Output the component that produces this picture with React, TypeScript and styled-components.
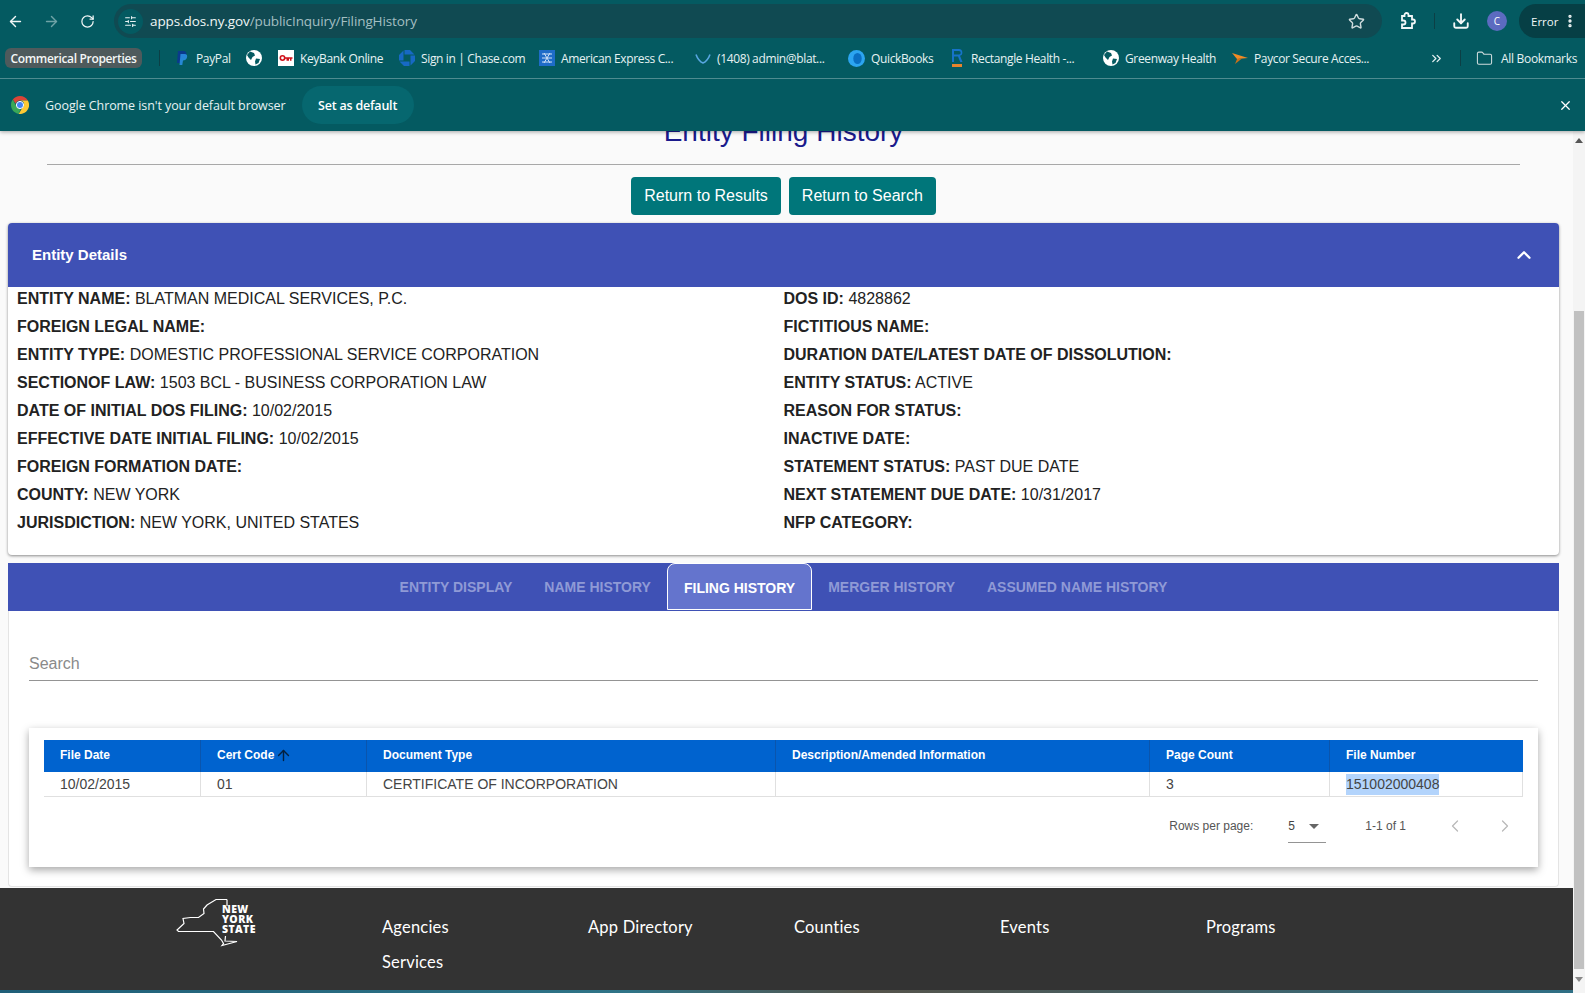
import React from "react";
import styled, { createGlobalStyle } from "styled-components";
import {
  ArrowLeft,
  ArrowRight,
  ArrowUp,
  ChevronLeft,
  ChevronRight,
  ChevronsRight,
  ChevronUp,
  Download,
  EllipsisVertical,
  Folder,
  RotateCw,
  SlidersHorizontal,
  Star,
  X,
} from "lucide-react";

const GlobalStyle = createGlobalStyle`
  html, body {
    margin: 0;
    padding: 0;
    overflow: hidden;
  }
  * {
    box-sizing: border-box;
  }
`;

const ExtensionIcon = () => (
  <svg width="20" height="20" viewBox="0 0 20 20" fill="none" stroke="#f2f7f7" strokeWidth="1.800">
    <path d="M5 5h2.500V4a2 2 0 0 1 4 0v1H15v3.500h1a2 2 0 0 1 0 4h-1V17H5v-3.500h1.500a2 2 0 0 0 0-4H5z" />
  </svg>
);

const Globe = () => (
  <svg width="16" height="16" viewBox="0 0 16 16">
    <circle cx="8" cy="8" r="8" fill="#fff" />
    <path d="M4 1.500 8 3 9 5.500 6.500 7 5 10 2.500 7.500 1 5zM10 8.500l4 .5-1.500 4-3 1.500-.5-3z" fill="#045a61" />
  </svg>
);

const PayPalIcon = () => (
  <svg width="16" height="16" viewBox="0 0 16 16">
    <path d="M4 1h5c3 0 4 2 3 4.500C11 8 9 8.500 7 8.500L6.300 13H3z" fill="#0a3a8c" />
    <path d="M6.500 4h4c2.500 0 3 1.500 2.500 3.500-.5 2-2 3-4 3L8.300 15H5.500z" fill="#2a8de0" opacity=".9" />
  </svg>
);

const KeyIcon = () => (
  <svg width="16" height="16" viewBox="0 0 16 16">
    <rect width="16" height="16" fill="#fff" />
    <circle cx="4.500" cy="8" r="2.200" fill="none" stroke="#d0121b" strokeWidth="1.600" />
    <path d="M6.500 7.200h8v1.600h-1v2h-1.500v-2h-1v2H8.500v-2h-2z" fill="#d0121b" />
  </svg>
);

const ChaseIcon = () => (
  <svg width="16" height="16" viewBox="0 0 16 16" fill="#1769c4">
    <path d="M5.500 0H11l4.500 4.500H5.500zM16 5.500V11l-4.500 4.500V5.500z" />
    <path d="M10.500 16H5L.5 11.500h10zM0 10.500V5l4.500-4.500v10z" />
    <rect x="5" y="5" width="6" height="6" fill="#045a61" />
  </svg>
);

const AmexIcon = () => (
  <svg width="16" height="16" viewBox="0 0 16 16">
    <rect width="16" height="16" fill="#1e6cc8" />
    <path d="M3 4h10M3 8h10M3 12h10M5 3l6 10M11 3 5 13" stroke="#cfe2f7" strokeWidth="1" />
  </svg>
);

const ChevronMark = () => (
  <svg width="16" height="16" viewBox="0 0 16 16">
    <path d="M1 4.500C3 10 5.500 12 8 13c2.500-1 5-3 7-8.500" fill="none" stroke="#58a6e0" strokeWidth="1.600" />
  </svg>
);

const QuickBooksIcon = () => (
  <svg width="17" height="17" viewBox="0 0 17 17">
    <circle cx="8.500" cy="8.500" r="8.500" fill="#2ca5f0" />
    <ellipse cx="9.500" cy="8.500" rx="4.200" ry="5.500" fill="#0a6fc2" />
  </svg>
);

const RectangleIcon = () => (
  <svg width="14" height="18" viewBox="0 0 14 18">
    <path
      fillRule="evenodd"
      d="M1 0h7a3.500 3.500 0 0 1 1 6.800L11.500 13H9.200L7 7.500H3V13H1zM3 2v3.500h5a1.750 1.750 0 0 0 0-3.500z"
      fill="#1673c9"
    />
    <rect x="1" y="15" width="10" height="3" fill="#e8842c" />
  </svg>
);

const PaycorIcon = () => (
  <svg width="16" height="12" viewBox="0 0 16 12">
    <path d="M0 1 16 6 5 7z" fill="#f08a24" />
    <path d="M5 7 10 6.500 3 12z" fill="#c9701a" />
  </svg>
);

const ChromeIcon = () => (
  <svg width="18" height="18" viewBox="0 0 18 18">
    <path d="M9 0a9 9 0 0 1 7.800 4.500H9A4.500 4.500 0 0 0 4.700 7.700L1.800 3.600A9 9 0 0 1 9 0z" fill="#db4437" />
    <path d="M1.800 3.600 5.300 10a4.500 4.500 0 0 0 4.500 2.400L7.700 17.900A9 9 0 0 1 1.800 3.600z" fill="#3aa757" />
    <path d="M16.800 4.500A9 9 0 0 1 7.700 17.900l3.900-6.600A4.500 4.500 0 0 0 12.900 6.800 4.500 4.500 0 0 0 9 4.500z" fill="#fcc934" />
    <circle cx="9" cy="9" r="3.600" fill="#4285f4" stroke="#fff" strokeWidth="1" />
  </svg>
);

const NewYorkLogo = () => (
  <svg width="82" height="50" viewBox="16 12 82 50">
    <path
      d="M67 14.500H56L47 20 43.500 24 44 28.500 38.500 32.500H30.500L23 33.500 24 38.500 17 45 18.500 46.500H53.500L61.500 55 63.500 58.500 62 60.500 77 56.500 65 56 65.500 51M67 14.500V21"
      fill="none"
      stroke="#fff"
      strokeWidth="1.200"
    />
    <LogoText x="62" y="28">NEW</LogoText>
    <LogoText x="62" y="38">YORK</LogoText>
    <LogoText x="62" y="48">STATE</LogoText>
  </svg>
);

const bookmarks = [
  { name: "PayPal", icon: <PayPalIcon />, width: 72 },
  { name: "", icon: <Globe />, width: 32 },
  { name: "KeyBank Online", icon: <KeyIcon />, width: 121 },
  { name: "Sign in | Chase.com", icon: <ChaseIcon />, width: 140 },
  { name: "American Express C...", icon: <AmexIcon />, width: 156 },
  { name: "(1408) admin@blat...", icon: <ChevronMark />, width: 153 },
  { name: "QuickBooks", icon: <QuickBooksIcon />, width: 103 },
  { name: "Rectangle Health -...", icon: <RectangleIcon />, width: 152 },
  { name: "Greenway Health", icon: <Globe />, width: 129 },
  { name: "Paycor Secure Acces...", icon: <PaycorIcon />, width: 188 },
];

const detailsLeft = [
  ["ENTITY NAME:", "BLATMAN MEDICAL SERVICES, P.C."],
  ["FOREIGN LEGAL NAME:", ""],
  ["ENTITY TYPE:", "DOMESTIC PROFESSIONAL SERVICE CORPORATION"],
  ["SECTIONOF LAW:", "1503 BCL - BUSINESS CORPORATION LAW"],
  ["DATE OF INITIAL DOS FILING:", "10/02/2015"],
  ["EFFECTIVE DATE INITIAL FILING:", "10/02/2015"],
  ["FOREIGN FORMATION DATE:", ""],
  ["COUNTY:", "NEW YORK"],
  ["JURISDICTION:", "NEW YORK, UNITED STATES"],
];

const detailsRight = [
  ["DOS ID:", "4828862"],
  ["FICTITIOUS NAME:", ""],
  ["DURATION DATE/LATEST DATE OF DISSOLUTION:", ""],
  ["ENTITY STATUS:", "ACTIVE"],
  ["REASON FOR STATUS:", ""],
  ["INACTIVE DATE:", ""],
  ["STATEMENT STATUS:", "PAST DUE DATE"],
  ["NEXT STATEMENT DUE DATE:", "10/31/2017"],
  ["NFP CATEGORY:", ""],
];

const tabs = ["Entity Display", "Name History", "Filing History", "Merger History", "Assumed Name History"];

const columns = [
  { title: "File Date", value: "10/02/2015", width: 157 },
  { title: "Cert Code", value: "01", width: 166 },
  { title: "Document Type", value: "CERTIFICATE OF INCORPORATION", width: 409 },
  { title: "Description/Amended Information", value: "", width: 374 },
  { title: "Page Count", value: "3", width: 180 },
  { title: "File Number", value: "151002000408", width: 193 },
];

const footerLinks = ["Agencies", "App Directory", "Counties", "Events", "Programs", "Services"];

const App: React.FC = () => {
  return (
    <Screen>
      <GlobalStyle />
      <BrowserChrome>
        <Toolbar>
          <NavButton>
            <ArrowLeft size={17} />
          </NavButton>
          <NavButton $dim>
            <ArrowRight size={17} />
          </NavButton>
          <NavButton>
            <RotateCw size={15} />
          </NavButton>
          <AddressBar>
            <SiteButton>
              <SlidersHorizontal size={13} />
            </SiteButton>
            <Host>apps.dos.ny.gov</Host>
            <UrlPath>/publicInquiry/FilingHistory</UrlPath>
            <StarSlot>
              <Star size={17} />
            </StarSlot>
          </AddressBar>
          <ToolIcon $width={50}>
            <ExtensionIcon />
          </ToolIcon>
          <ToolSeparator />
          <ToolIcon $width={52}>
            <Download size={18} strokeWidth={2.5} />
          </ToolIcon>
          <Avatar>C</Avatar>
          <ErrorPill>
            Error
            <EllipsisVertical size={16} strokeWidth={3} />
          </ErrorPill>
        </Toolbar>
        <BookmarkBar>
          <FolderPill>Commerical Properties</FolderPill>
          <BookmarkSeparator />
          {bookmarks.map((b) => (
            <Bookmark key={b.name || "globe"} $width={b.width}>
              {b.icon}
              {b.name && <span>{b.name}</span>}
            </Bookmark>
          ))}
          <MoreBookmarks>
            <ChevronsRight size={15} />
          </MoreBookmarks>
          <BookmarkSeparator $after />
          <AllBookmarks>
            <Folder size={17} strokeWidth={1.5} />
            <span>All Bookmarks</span>
          </AllBookmarks>
        </BookmarkBar>
        <InfoBanner>
          <ChromeIcon />
          <BannerText>Google Chrome isn't your default browser</BannerText>
          <DefaultButton>Set as default</DefaultButton>
          <BannerClose>
            <X size={15} />
          </BannerClose>
        </InfoBanner>
      </BrowserChrome>

      <Viewport>
        <Main>
          <TitleClip>
            <Title>Entity Filing History</Title>
          </TitleClip>
          <Rule />
          <ButtonRow>
            <ActionButton>Return to Results</ActionButton>
            <ActionButton>Return to Search</ActionButton>
          </ButtonRow>

          <DetailsCard>
            <DetailsHeader>
              <span>Entity Details</span>
              <ChevronUp size={22} strokeWidth={2.5} />
            </DetailsHeader>
            <DetailsBody>
              {[detailsLeft, detailsRight].map((rows, i) => (
                <DetailsColumn key={i}>
                  {rows.map(([label, value]) => (
                    <DetailRow key={label}>
                      <strong>{label}</strong> {value}
                    </DetailRow>
                  ))}
                </DetailsColumn>
              ))}
            </DetailsBody>
          </DetailsCard>

          <TabBar>
            {tabs.map((t) => (
              <Tab key={t} $active={t === "Filing History"}>
                {t}
              </Tab>
            ))}
          </TabBar>

          <TabPanel>
            <SearchField>Search</SearchField>
            <TablePaper>
              <HeaderRow>
                {columns.map((c) => (
                  <HeaderCell key={c.title} $width={c.width}>
                    {c.title}
                    {c.title === "Cert Code" && <SortArrow size={17} strokeWidth={2} />}
                  </HeaderCell>
                ))}
              </HeaderRow>
              <BodyRow>
                {columns.map((c) => (
                  <BodyCell key={c.title} $width={c.width}>
                    {c.title === "File Number" ? <Selected>{c.value}</Selected> : c.value}
                  </BodyCell>
                ))}
              </BodyRow>
              <Pagination>
                <span>Rows per page:</span>
                <RowsSelect>
                  5<Caret />
                </RowsSelect>
                <PageRange>1-1 of 1</PageRange>
                <PageArrow>
                  <ChevronLeft size={20} strokeWidth={1.5} />
                </PageArrow>
                <PageArrow>
                  <ChevronRight size={20} strokeWidth={1.5} />
                </PageArrow>
              </Pagination>
            </TablePaper>
          </TabPanel>

          <Footer>
            <LogoSlot>
              <NewYorkLogo />
            </LogoSlot>
            <FooterLinks>
              {footerLinks.map((l) => (
                <FooterLink key={l}>{l}</FooterLink>
              ))}
            </FooterLinks>
          </Footer>
          <FooterStrip />
        </Main>
        <ScrollBar>
          <ScrollArrow />
          <ScrollThumb />
          <ScrollArrow $down />
        </ScrollBar>
      </Viewport>
    </Screen>
  );
};

export default App;

const LogoText = styled.text`
  font-family: "Open Sans", sans-serif;
  font-size: 10.5px;
  font-weight: 800;
  letter-spacing: 0.4px;
  fill: #fff;
`;

const Screen = styled.div`
  width: 1585px;
  height: 993px;
  overflow: hidden;
  display: flex;
  flex-direction: column;
  background: #fafafa;
  font-family: "Liberation Sans", Arial, sans-serif;
`;

const BrowserChrome = styled.div`
  position: relative;
  z-index: 2;
  height: 131px;
  flex: none;
  background: #045a61;
  color: #e6f2f3;
  font-family: "Open Sans", sans-serif;
  box-shadow: 0 1px 4px rgba(0, 0, 0, 0.35);
`;

const Toolbar = styled.div`
  height: 40px;
  padding-top: 4px;
  display: flex;
  align-items: flex-start;
`;

const NavButton = styled.div<{ $dim?: boolean }>`
  width: 36px;
  height: 34px;
  flex: none;
  display: flex;
  align-items: center;
  justify-content: center;
  color: ${(p) => (p.$dim ? "#6fa3a7" : "#f2f7f7")};

  &:first-child {
    margin-left: -3px;
  }
`;

const AddressBar = styled.div`
  width: 1268px;
  height: 34px;
  flex: none;
  margin-left: 9px;
  border-radius: 17px;
  background: #104a52;
  display: flex;
  align-items: center;
  padding-left: 4px;
  font-size: 13.500px;
  letter-spacing: -0.1px;
`;

const SiteButton = styled.div`
  width: 25px;
  height: 25px;
  border-radius: 50%;
  background: #045a61;
  display: flex;
  align-items: center;
  justify-content: center;
  margin-right: 7px;
`;

const Host = styled.span`
  color: #f1f6f6;
`;

const UrlPath = styled.span`
  color: #a4bfc2;
`;

const StarSlot = styled.div`
  margin-left: auto;
  margin-right: 17px;
  display: flex;
  color: #cfdcdd;
`;

const ToolIcon = styled.div<{ $width: number }>`
  width: ${(p) => p.$width}px;
  height: 34px;
  flex: none;
  display: flex;
  align-items: center;
  justify-content: center;
  color: #f2f7f7;
`;

const ToolSeparator = styled.div`
  width: 1px;
  height: 16px;
  margin: 9px 0 0 2px;
  background: #0c3f45;
  flex: none;
`;

const Avatar = styled.div`
  width: 20px;
  height: 20px;
  flex: none;
  margin-top: 7px;
  border-radius: 50%;
  background: #5c6bc0;
  color: #fff;
  font-size: 10px;
  display: flex;
  align-items: center;
  justify-content: center;
`;

const ErrorPill = styled.div`
  width: 67px;
  height: 34px;
  flex: none;
  margin-left: 12px;
  padding-left: 12px;
  border-radius: 17px 0 0 17px;
  background: #063f45;
  color: #f2f7f7;
  font-size: 11.500px;
  display: flex;
  align-items: center;
  gap: 4px;
`;

const BookmarkBar = styled.div`
  height: 39px;
  display: flex;
  align-items: center;
  padding: 0 0 2px 5px;
  border-bottom: 1px solid #4f8b90;
  font-size: 12px;
`;

const FolderPill = styled.div`
  width: 137px;
  height: 20px;
  flex: none;
  border-radius: 6px;
  background: #4e5a5c;
  color: #f4f7f7;
  font-weight: 600;
  font-size: 12px;
  letter-spacing: -0.33px;
  white-space: nowrap;
  display: flex;
  align-items: center;
  justify-content: center;
`;

const BookmarkSeparator = styled.div<{ $after?: boolean }>`
  width: 1px;
  height: 16px;
  flex: none;
  margin: ${(p) => (p.$after ? "0 15px 0 15px" : "0 6px 0 17px")};
  background: #0c3f45;
`;

const Bookmark = styled.div<{ $width: number }>`
  width: ${(p) => p.$width}px;
  flex: none;
  display: flex;
  align-items: center;
  gap: 6px;
  padding-left: 8px;
  white-space: nowrap;
  letter-spacing: -0.36px;

  svg {
    flex: none;
  }
`;

const MoreBookmarks = styled.div`
  width: 16px;
  margin-left: 17px;
  flex: none;
  display: flex;
  color: #e6f2f3;
`;

const AllBookmarks = styled.div`
  flex: none;
  display: flex;
  align-items: center;
  gap: 8px;
  white-space: nowrap;
  letter-spacing: -0.3px;

  svg {
    color: #cfdcdd;
  }
`;

const InfoBanner = styled.div`
  height: 52px;
  display: flex;
  align-items: center;
  padding-left: 11px;
`;

const BannerText = styled.div`
  margin-left: 16px;
  font-size: 12.500px;
  letter-spacing: -0.08px;
  white-space: nowrap;
`;

const DefaultButton = styled.div`
  width: 112px;
  height: 38px;
  margin-left: 16px;
  border-radius: 19px;
  background: #06676f;
  color: #fff;
  font-weight: 600;
  font-size: 12.500px;
  letter-spacing: -0.2px;
  display: flex;
  align-items: center;
  justify-content: center;
`;

const BannerClose = styled.div`
  margin-left: auto;
  margin-right: 12px;
  display: flex;
  color: #fff;
`;

const Viewport = styled.div`
  flex: 1;
  min-height: 0;
  display: flex;
`;

const Main = styled.main`
  flex: 1;
  min-width: 0;
  display: flex;
  flex-direction: column;
`;

const TitleClip = styled.div`
  height: 16px;
  flex: none;
  padding-right: 6px;
  overflow: hidden;
  display: flex;
  align-items: flex-end;
  justify-content: center;
`;

const Title = styled.h1`
  margin: 0 0 -1px;
  color: #1a1a8c;
  font-size: 28px;
  font-weight: 400;
  line-height: 32px;
  white-space: nowrap;
`;

const Rule = styled.div`
  height: 1px;
  flex: none;
  margin: 17px 53px 0 47px;
  background: #a8a8a8;
`;

const ButtonRow = styled.div`
  margin-top: 12px;
  padding-right: 6px;
  display: flex;
  justify-content: center;
  gap: 8px;
`;

const ActionButton = styled.div`
  height: 38px;
  padding: 0 13px;
  border-radius: 4px;
  background: #00767a;
  color: #fff;
  font-size: 16px;
  display: flex;
  align-items: center;
`;

const DetailsCard = styled.section`
  margin: 8px 14px 0 8px;
  height: 332px;
  flex: none;
  border-radius: 4px;
  background: #fff;
  box-shadow: 0 1px 3px rgba(0, 0, 0, 0.45);
  overflow: hidden;
`;

const DetailsHeader = styled.div`
  height: 64px;
  padding: 0 24px 1px;
  background: #3f51b5;
  color: #fff;
  font-size: 15px;
  font-weight: 700;
  display: flex;
  align-items: center;
  justify-content: space-between;
`;

const DetailsBody = styled.div`
  display: grid;
  grid-template-columns: 766.500px 1fr;
  padding: 0 9px;
`;

const DetailsColumn = styled.div`
  display: flex;
  flex-direction: column;
`;

const DetailRow = styled.div`
  height: 28px;
  line-height: 23px;
  color: #222;
  font-size: 16px;
  white-space: nowrap;

  strong {
    font-weight: 700;
  }
`;

const TabBar = styled.div`
  margin: 8px 14px 0 8px;
  height: 48px;
  flex: none;
  background: #3f51b5;
  display: flex;
  justify-content: center;
`;

const Tab = styled.div<{ $active?: boolean }>`
  padding: ${(p) => (p.$active ? "2px 16px 0" : "0 16px")};
  height: ${(p) => (p.$active ? "47px" : "48px")};
  border: ${(p) => (p.$active ? "1px solid #fff" : "0")};
  border-radius: ${(p) => (p.$active ? "8px 8px 0 0" : "0")};
  background: ${(p) => (p.$active ? "#6474cd" : "transparent")};
  color: ${(p) => (p.$active ? "#fff" : "#8f9ad6")};
  font-size: 14px;
  font-weight: 700;
  text-transform: uppercase;
  white-space: nowrap;
  display: flex;
  align-items: center;
`;

const TabPanel = styled.div`
  margin: 0 14px 0 8px;
  height: 276px;
  flex: none;
  padding: 33px 20px 0 20px;
  background: #fff;
  border: 1px solid #e4e4e4;
  border-top: 0;
  border-radius: 0 0 4px 4px;
`;

const SearchField = styled.div`
  height: 37px;
  border-bottom: 1px solid #949494;
  color: #8a8a8a;
  font-size: 16px;
  line-height: 40px;
`;

const TablePaper = styled.div`
  height: 139px;
  margin-top: 47px;
  padding: 12px 15px 0;
  background: #fff;
  box-shadow: 0 3px 8px rgba(0, 0, 0, 0.35);
`;

const HeaderRow = styled.div`
  height: 32px;
  background: #0063cf;
  display: flex;
`;

const HeaderCell = styled.div<{ $width: number }>`
  width: ${(p) => p.$width}px;
  flex: none;
  padding: 0 0 2px 16px;
  border-right: 1px solid #0a55ad;
  color: #fff;
  font-size: 12px;
  font-weight: 700;
  display: flex;
  align-items: center;

  &:last-child {
    border-right: 0;
  }
`;

const SortArrow = styled(ArrowUp)`
  margin-left: 1px;
  color: #04203f;
`;

const BodyRow = styled.div`
  height: 25px;
  display: flex;
  border-bottom: 1px solid #e0e0e0;
`;

const BodyCell = styled.div<{ $width: number }>`
  width: ${(p) => p.$width}px;
  flex: none;
  padding-left: 16px;
  border-right: 1px solid #e0e0e0;
  color: #444;
  font-size: 14px;
  display: flex;
  align-items: center;
`;

const Selected = styled.span`
  background: #b3d4fc;
  line-height: 21px;
`;

const Pagination = styled.div`
  height: 58px;
  display: flex;
  align-items: flex-start;
  justify-content: flex-end;
  padding-top: 21px;
  color: #555;
  font-size: 12px;
  line-height: 16px;
  white-space: nowrap;
`;

const RowsSelect = styled.div`
  position: relative;
  width: 38px;
  height: 25px;
  flex: none;
  margin-left: 35px;
  border-bottom: 1px solid #949494;
  color: #444;
`;

const Caret = styled.i`
  position: absolute;
  top: 6px;
  right: 7px;
  border-left: 5px solid transparent;
  border-right: 5px solid transparent;
  border-top: 5px solid #666;
`;

const PageRange = styled.span`
  margin: 0 31px 0 39px;
`;

const PageArrow = styled.div`
  width: 36px;
  flex: none;
  display: flex;
  justify-content: center;
  margin-top: -2px;
  color: #b9b9b9;

  & + & {
    margin-left: 14px;
  }
`;

const Footer = styled.footer`
  height: 102px;
  flex: none;
  margin-top: 1px;
  background: #333;
  display: flex;
`;

const LogoSlot = styled.div`
  width: 382px;
  flex: none;
  padding: 9px 0 0 176px;
`;

const FooterLinks = styled.div`
  margin-top: 22px;
  display: grid;
  grid-template-columns: repeat(5, 206px);
  grid-auto-rows: 35px;
`;

const FooterLink = styled.div`
  color: #fff;
  font-family: Lato, sans-serif;
  font-size: 16.500px;
  letter-spacing: 0.2px;
  line-height: 35px;
`;

const FooterStrip = styled.div`
  height: 3px;
  flex: none;
  background: linear-gradient(90deg, #1f5f78, #2f7487 40%, #55534a 55%, #2f6f85 100%);
`;

const ScrollBar = styled.div`
  width: 12px;
  flex: none;
  background: #f4f4f4;
  display: flex;
  flex-direction: column;
  align-items: center;
`;

const ScrollArrow = styled.i<{ $down?: boolean }>`
  margin-top: ${(p) => (p.$down ? "8px" : "7px")};
  border-left: 4px solid transparent;
  border-right: 4px solid transparent;
  border-bottom: ${(p) => (p.$down ? "0" : "5px solid #555")};
  border-top: ${(p) => (p.$down ? "5px solid #888" : "0")};
`;

const ScrollThumb = styled.div`
  width: 10px;
  height: 658px;
  margin-top: 168px;
  background: #c1c1c1;
`;
